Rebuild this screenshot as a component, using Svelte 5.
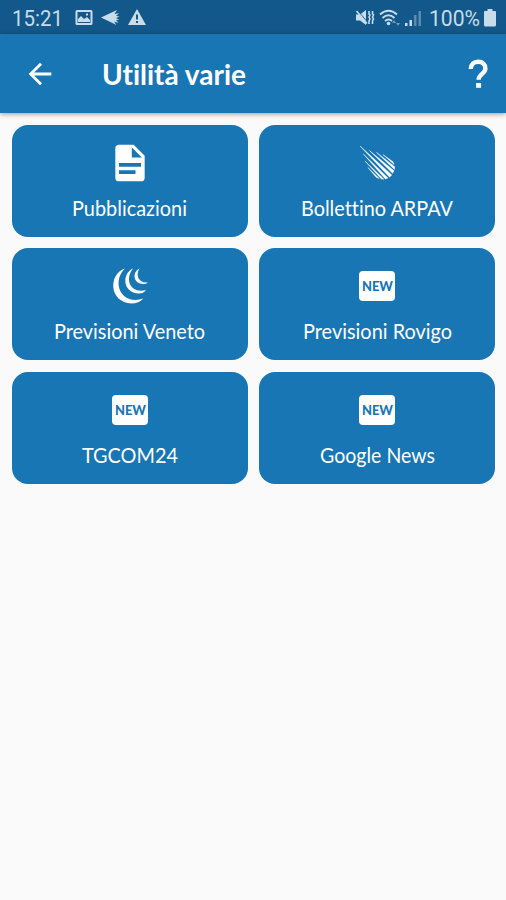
<script>
  const tiles = [
    { label: 'Pubblicazioni', icon: 'document', width: 115 },
    { label: 'Bollettino ARPAV', icon: 'meteor', width: 152 },
    { label: 'Previsioni Veneto', icon: 'crescents', width: 151 },
    { label: 'Previsioni Rovigo', icon: 'new', width: 149 },
    { label: 'TGCOM24', icon: 'new', width: 96 },
    { label: 'Google News', icon: 'new', width: 115 }
  ];
</script>

<div class="screen">
  <div class="status">
    <span class="time"><svg width="52" height="24"><text x="0" y="20" textLength="51" lengthAdjust="spacingAndGlyphs">15:21</text></svg></span>
    <svg class="picture" width="18" height="18" viewBox="0 0 18 18">
      <path fill-rule="evenodd" d="M2 1h14q1.500 0 1.500 1.500v12q0 1.500-1.500 1.500H2Q.5 16 .5 14.500v-12Q.5 1 2 1zm.5 2v11h13V3z" />
      <path d="M3 13v-3l3-3 3 3 3-2 3 3v2zM11 4.500h2v2h-2z" />
    </svg>
    <svg class="plane" width="19" height="17" viewBox="0 0 19 17">
      <path d="M0 8.500 16 1l-2.500 4 4.500-.7-3 2.700 3.500.4-3.500 1.800 3.500 1.600-3.500.2 2.500 2.700-4.500-1 2.500 3.300z" />
    </svg>
    <svg class="warning" width="18" height="17" viewBox="0 0 18 17">
      <path fill-rule="evenodd" d="M9 0 18 16H0zM8 5.500v5h2v-5zM8 12v2h2v-2z" />
    </svg>
    <span class="spacer"></span>
    <svg class="mute" width="19" height="18" viewBox="0 0 19 18">
      <path d="M1 5.500h4L11 1v15l-6-4.500H1z" />
      <path d="m2.500 1.500 9.500 11" fill="none" stroke="#12588a" stroke-width="1" />
      <path d="m1.500 2 10.500 12.500M14 2v3l1 1-1 2 1 2-1 2v3M17.500 2v3l1 1-1 2 1 2-1 2v3" fill="none" stroke="#c8dce9" stroke-width="1.600" />
    </svg>
    <svg class="wifi" width="22" height="18" viewBox="0 0 22 18">
      <g fill="none" stroke="#c8dce9" stroke-width="1.900">
        <path d="M1 5.500Q9.500-2 18 5.500M3.500 9Q9.500 3.500 15.500 9M6 12q3.500-3 7 0" />
      </g>
      <circle cx="9.500" cy="14.500" r="1.800" />
      <path opacity=".5" d="m13 14 2-3 2 3zm4 0h4l-2 3z" />
    </svg>
    <svg class="signal" width="17" height="18" viewBox="0 0 17 18">
      <path d="M0 14h2.500v3H0zM4.500 11H7v6H4.500z" />
      <path opacity=".4" d="M9 6h2.500v11H9zM13.500 2H16v15h-2.500z" />
    </svg>
    <svg class="percent" width="51" height="24"><text x="0" y="20" textLength="51" lengthAdjust="spacingAndGlyphs">100%</text></svg>
    <svg class="battery" width="12" height="18" viewBox="0 0 12 18">
      <path d="M3.500 0h5v2H11q1 0 1 1v13q0 1.500-1.500 1.500h-9Q0 17.500 0 16V3q0-1 1-1h2.500z" />
    </svg>
  </div>

  <header>
    <svg class="back" width="34" height="34" viewBox="0 0 24 24"><path d="M20 11H7.830l5.590-5.590L12 4l-8 8 8 8 1.410-1.410L7.830 13H20z" /></svg>
    <h1><svg width="146" height="40"><text x="0" y="31" textLength="144" lengthAdjust="spacingAndGlyphs">Utilità varie</text></svg></h1>
    <svg class="help" width="20" height="32" viewBox="0 0 20 32">
      <path d="M2.800 11C2.800 6.500 5.800 3.800 10.200 3.800s7.200 2.700 7.200 6.700c0 5.300-6.800 5.500-6.800 11.200" fill="none" stroke="#fff" stroke-width="4.400" />
      <path d="M8.100 25h5v4.800h-5z" />
    </svg>
  </header>

  <main>
    {#each tiles as tile}
      <div class="tile">
        <div class="icon">
          {#if tile.icon === 'document'}
            <svg width="44" height="44" viewBox="0 0 24 24"><path d="M13 9h5.500L13 3.500V9M6 2h8l6 6v12a2 2 0 0 1-2 2H6a2 2 0 0 1-2-2V4a2 2 0 0 1 2-2m9 16v-2H6v2h9m3-4v-2H6v2h12z" /></svg>
          {:else if tile.icon === 'meteor'}
            <svg width="44" height="44" viewBox="0 0 44 44">
              <g stroke="#fff" stroke-width=".4">
                <path d="M5 5 36.800 34 34.600 36.200z" />
                <path d="M14.400 9.500 39 29.700 37.600 32.300zM21.400 11.300 39.700 25.700 39.500 28.400zM27.900 13.500 38 20.800 39.100 23.600z" />
                <path d="M8.400 13 33 37 30.400 38.100zM9.900 20 29 38.200 26.400 38.100zM12.900 26.500 24.300 37.600 21.200 36.300z" />
              </g>
            </svg>
          {:else if tile.icon === 'crescents'}
            <svg width="44" height="44" viewBox="0 0 44 44">
              <path d="M17 4.500C0 10 1 38.500 23.500 39.500q7 0 12-5C12 42 3.500 17 17 4.500z" />
              <path d="M25 4.500c-11.500 5-10.500 24.500 6 25q4.500 0 7-3.500C23 30 16 16 25 4.500z" />
              <path d="M31.500 4.500c-8 4-6 15.500 4 15.500q2.500 0 4.500-1.500c-9 1-13-7-8.500-14z" />
            </svg>
          {:else}
            <span class="new"><svg width="36" height="30"><text x="3" y="20" textLength="31" lengthAdjust="spacingAndGlyphs">NEW</text></svg></span>
          {/if}
        </div>
        <svg class="label" width={tile.width} height="30"><text x="0" y="21.500" textLength={tile.width} lengthAdjust="spacingAndGlyphs">{tile.label}</text></svg>
      </div>
    {/each}
  </main>
</div>

<style>
  .screen {
    height: 900px;
    background: #fafafa;
    font-family: Lato, sans-serif;
    font-variant-ligatures: none;
    overflow: hidden;
  }
  svg {
    display: block;
    flex: none;
    fill: #fff;
    overflow: visible;
  }
  .status {
    height: 34px;
    box-sizing: border-box;
    padding: 1px 10px 0 12px;
    display: flex;
    align-items: center;
    background: #12588a;
    font-family: Roboto, sans-serif;
    font-size: 22px;
  }
  .status svg { fill: #c8dce9; }
  .time { margin-right: 11px; }
  .plane { margin-left: 8px; }
  .warning { margin-left: 8px; }
  .spacer { flex: 1; }
  .wifi { margin-left: 5px; }
  .signal { margin-left: 4px; }
  .percent { margin-left: 7px; }
  .battery { margin-left: 4px; }
  header {
    position: relative;
    height: 78.500px;
    box-sizing: border-box;
    padding: 1px 18px 0 23px;
    display: flex;
    align-items: center;
    background: #1976b4;
    box-shadow: 0 1px 5px rgba(0, 0, 0, 0.4);
  }
  h1 {
    margin: 0 auto 0 44.500px;
    font-size: 28px;
    font-weight: 700;
  }
  main {
    padding: 12px 10.500px 0 11.600px;
    display: grid;
    grid-template-columns: 236px 236px;
    grid-auto-rows: 112px;
    gap: 11.700px;
  }
  .tile {
    border-radius: 16px;
    background: #1976b4;
    display: flex;
    flex-direction: column;
    align-items: center;
    padding-top: 16px;
    box-sizing: border-box;
  }
  .icon {
    width: 44px;
    height: 44px;
    display: flex;
    align-items: center;
    justify-content: center;
  }
  .new {
    width: 36px;
    height: 30px;
    border-radius: 4px;
    background: #fff;
    font-family: Lato, sans-serif;
    font-size: 14px;
    font-weight: 900;
  }
  .new svg { fill: #1976b4; }
  .label {
    margin-top: 9px;
    font-size: 21px;
  }
</style>
